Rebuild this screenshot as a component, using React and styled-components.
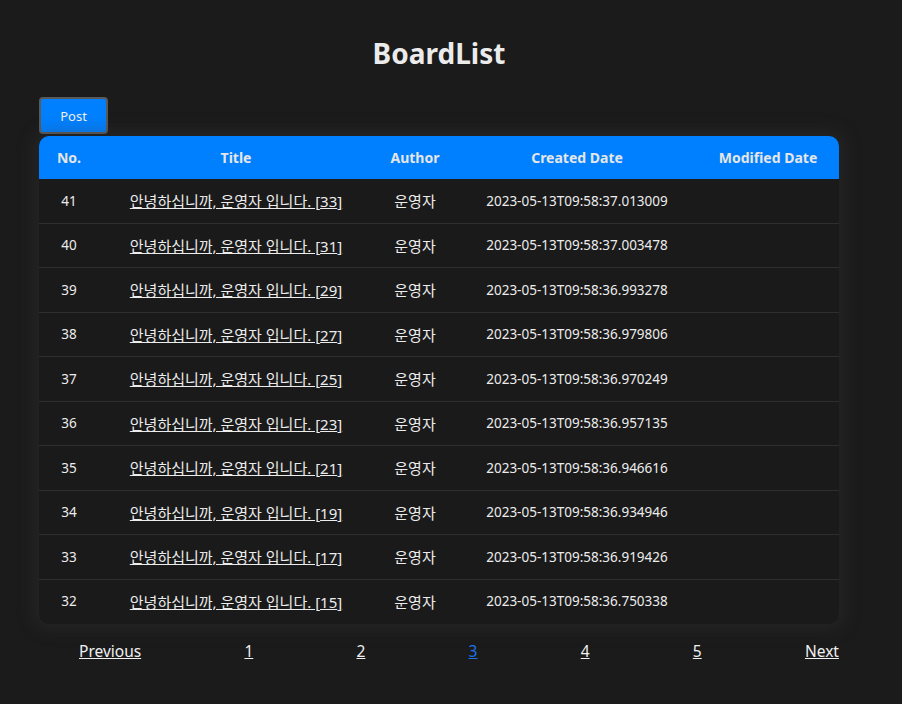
import React from "react";
import styled, { createGlobalStyle } from "styled-components";

const Global = createGlobalStyle`
  html, body { margin: 0; background: #1b1b1b; }
  body { font-family: "Noto Sans", "Noto Sans CJK KR", sans-serif; color: #e8e8e8; }
`;

const Page = styled.div`
  width: 800px;
  margin: 0 0 0 39px;
  padding: 33px 0 40px;
  display: flex;
  flex-direction: column;
`;

const Heading = styled.h1`
  margin: 0 0 24px;
  text-align: center;
  font-size: 28px;
  line-height: 40px;
  font-weight: 700;
  color: #ebebeb;
`;

const PostButton = styled.button`
  align-self: flex-start;
  width: 69px;
  height: 37px;
  margin-bottom: 2px;
  background: #0080ff;
  color: #f2f2f2;
  border: 2px solid #5a5a5a;
  border-radius: 4px;
  font-family: inherit;
  font-size: 13px;
  cursor: pointer;
`;

const Table = styled.table`
  width: 800px;
  border-collapse: separate;
  border-spacing: 0;
  table-layout: fixed;
  background: #1a1a1a;
  border-radius: 10px;
  overflow: hidden;
  box-shadow: 0 0 18px 4px rgba(60, 60, 60, 0.35);
  font-size: 14px;
`;

const Th = styled.th`
  width: ${(p) => p.w}px;
  height: 43px;
  padding: 0;
  background: #0080ff;
  color: #e6e6e6;
  font-weight: 700;
  font-size: 14px;
  text-align: center;
`;

const Td = styled.td`
  height: 43.5px;
  padding: 0;
  text-align: center;
  color: #ececec;
  border-bottom: 1px solid ${(p) => (p.last ? "transparent" : "#2e2e2e")};
  font-size: ${(p) => (p.small ? "13.5px" : "15px")};
`;

const TitleLink = styled.a`
  color: #ececec;
  text-decoration: underline;
  cursor: pointer;
`;

const Pager = styled.div`
  display: flex;
  justify-content: space-between;
  padding: 0 0 0 40px;
  margin-top: 16px;
  font-size: 15.5px;
`;

const PageLink = styled.a`
  color: ${(p) => (p.active ? "#1a73e8" : "#f0f0f0")};
  text-decoration: underline;
  cursor: pointer;
`;

const cols = [
  { name: "No.", w: 60 },
  { name: "Title", w: 274 },
  { name: "Author", w: 84 },
  { name: "Created Date", w: 240 },
  { name: "Modified Date", w: 142 },
];

const rows = [
  [41, 33, "37.013009"],
  [40, 31, "37.003478"],
  [39, 29, "36.993278"],
  [38, 27, "36.979806"],
  [37, 25, "36.970249"],
  [36, 23, "36.957135"],
  [35, 21, "36.946616"],
  [34, 19, "36.934946"],
  [33, 17, "36.919426"],
  [32, 15, "36.750338"],
];

export default function App() {
  return (
    <>
      <Global />
      <Page>
        <Heading>BoardList</Heading>
        <PostButton>Post</PostButton>
        <Table>
          <thead>
            <tr>
              {cols.map((c) => (
                <Th key={c.name} w={c.w}>{c.name}</Th>
              ))}
            </tr>
          </thead>
          <tbody>
            {rows.map(([no, n, t], i) => {
              const last = i === rows.length - 1;
              return (
                <tr key={no}>
                  <Td last={last} small>{no}</Td>
                  <Td last={last}>
                    <TitleLink>안녕하십니까, 운영자 입니다. [{n}]</TitleLink>
                  </Td>
                  <Td last={last}>운영자</Td>
                  <Td last={last} small>2023-05-13T09:58:{t}</Td>
                  <Td last={last}></Td>
                </tr>
              );
            })}
          </tbody>
        </Table>
        <Pager>
          <PageLink>Previous</PageLink>
          {[1, 2, 3, 4, 5].map((p) => (
            <PageLink key={p} active={p === 3}>{p}</PageLink>
          ))}
          <PageLink>Next</PageLink>
        </Pager>
      </Page>
    </>
  );
}
